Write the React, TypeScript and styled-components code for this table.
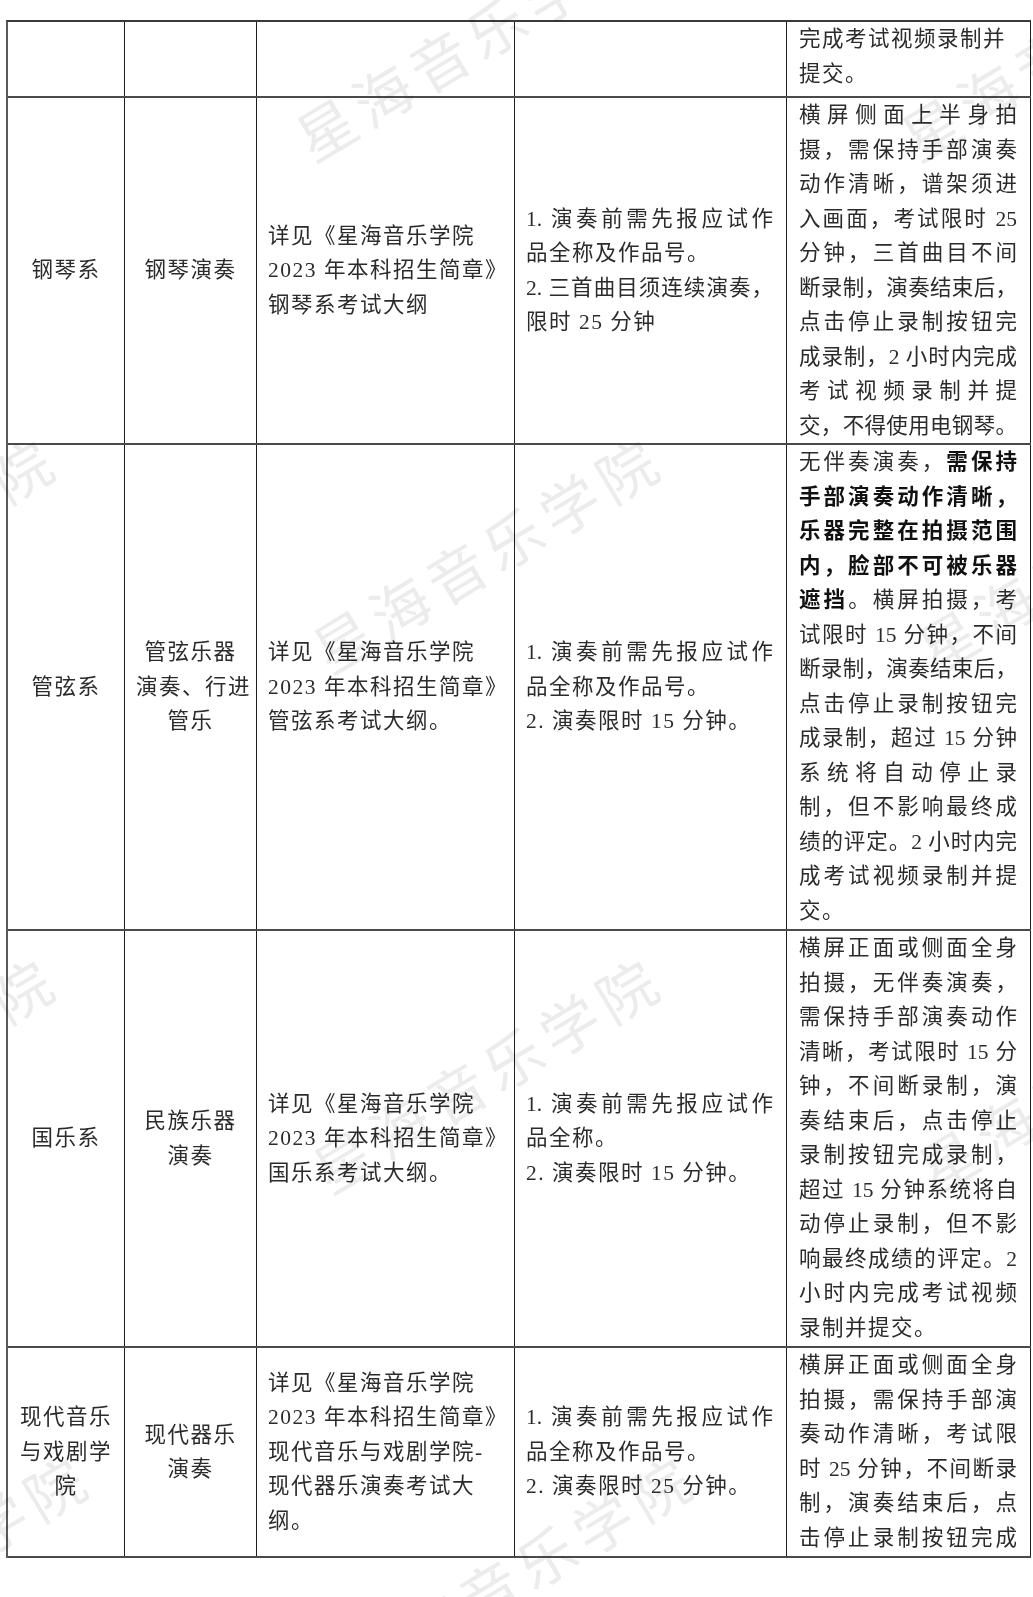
import React from 'react';
import styled, { createGlobalStyle, css } from 'styled-components';

const GlobalStyle = createGlobalStyle`
  html, body {
    margin: 0;
    padding: 0;
    background: #fff;
  }
  body {
    font-family: "Liberation Serif", "Noto Sans CJK SC", serif;
  }
`;

const Page = styled.div`
  position: relative;
  width: 1033px;
  height: 1597px;
  overflow: hidden;
  box-sizing: border-box;
  padding: 20px 0 0 6px;
  background: #fff;
`;

const Table = styled.div`
  display: flex;
  flex-direction: column;
  width: 1025px;
  box-sizing: border-box;
  border-top: 2px solid #3a3a3a;
  border-left: 2px solid #5a5a5a;
`;

const Row = styled.div<{ $height: number }>`
  display: grid;
  grid-template-columns: 117px 132px 258px 272px 244px;
  height: ${(p) => p.$height}px;
  box-sizing: border-box;
  border-bottom: 2px solid #4a4a4a;
`;

const Cell = styled.div<{ $center?: boolean; $top?: boolean; $padRight?: number }>`
  display: flex;
  flex-direction: column;
  justify-content: ${(p) => (p.$top ? 'flex-start' : 'center')};
  box-sizing: border-box;
  padding: 0 ${(p) => p.$padRight ?? 11}px 0 ${(p) => (p.$top ? 12 : 11)}px;
  border-right: 1px solid #1e1e1e;
  text-align: ${(p) => (p.$center ? 'center' : 'left')};
  font-size: 21.5px;
  line-height: 34.5px;
  color: #2b2b2b;
  overflow: hidden;
`;

const Line = styled.span<{ $full?: boolean }>`
  display: block;
  ${(p) =>
    p.$full
      ? css`
          letter-spacing: 0;
          text-align: justify;
          text-align-last: justify;
        `
      : css`
          letter-spacing: 1.5px;
          white-space: nowrap;
        `}
`;

const Strong = styled.b`
  font-weight: 700;
  color: #111;
`;

const WatermarkLayer = styled.div`
  position: absolute;
  inset: 0;
  pointer-events: none;
`;

const Watermark = styled.span`
  position: absolute;
  transform: translate(-50%, -50%) rotate(-31deg);
  font-family: "Noto Sans CJK SC", sans-serif;
  font-size: 58px;
  letter-spacing: 8px;
  line-height: 1;
  color: #ececec;
  white-space: nowrap;
  mix-blend-mode: multiply;
`;

type TextLine = { t: string; f?: boolean };

interface IExamRow {
  height: number;
  dept: TextLine[];
  major: TextLine[];
  outline: TextLine[];
  req: TextLine[];
  note: TextLine[];
}

const L = (t: string, f = false): TextLine => ({ t, f });

const OUTLINE_HEAD = [L('详见《星海音乐学院'), L('2023 年本科招生简章》')];

const rows: IExamRow[] = [
  {
    height: 76,
    dept: [],
    major: [],
    outline: [],
    req: [],
    note: [L('完成考试视频录制并'), L('提交。')],
  },
  {
    height: 347,
    dept: [L('钢琴系')],
    major: [L('钢琴演奏')],
    outline: [...OUTLINE_HEAD, L('钢琴系考试大纲')],
    req: [L('1. 演奏前需先报应试作', true), L('品全称及作品号。'), L('2. 三首曲目须连续演奏，', true), L('限时 25 分钟')],
    note: [
      L('横屏侧面上半身拍', true),
      L('摄，需保持手部演奏', true),
      L('动作清晰，谱架须进', true),
      L('入画面，考试限时 25', true),
      L('分钟，三首曲目不间', true),
      L('断录制，演奏结束后，', true),
      L('点击停止录制按钮完', true),
      L('成录制，2 小时内完成', true),
      L('考试视频录制并提', true),
      L('交，不得使用电钢琴。', true),
    ],
  },
  {
    height: 486,
    dept: [L('管弦系')],
    major: [L('管弦乐器'), L('演奏、行进'), L('管乐')],
    outline: [...OUTLINE_HEAD, L('管弦系考试大纲。')],
    req: [L('1. 演奏前需先报应试作', true), L('品全称及作品号。'), L('2. 演奏限时 15 分钟。')],
    note: [
      L('无伴奏演奏，**需保持**', true),
      L('**手部演奏动作清晰，**', true),
      L('**乐器完整在拍摄范围**', true),
      L('**内，脸部不可被乐器**', true),
      L('**遮挡**。横屏拍摄，考', true),
      L('试限时 15 分钟，不间', true),
      L('断录制，演奏结束后，', true),
      L('点击停止录制按钮完', true),
      L('成录制，超过 15 分钟', true),
      L('系统将自动停止录', true),
      L('制，但不影响最终成', true),
      L('绩的评定。2 小时内完', true),
      L('成考试视频录制并提', true),
      L('交。'),
    ],
  },
  {
    height: 417,
    dept: [L('国乐系')],
    major: [L('民族乐器'), L('演奏')],
    outline: [...OUTLINE_HEAD, L('国乐系考试大纲。')],
    req: [L('1. 演奏前需先报应试作', true), L('品全称。'), L('2. 演奏限时 15 分钟。')],
    note: [
      L('横屏正面或侧面全身', true),
      L('拍摄，无伴奏演奏，', true),
      L('需保持手部演奏动作', true),
      L('清晰，考试限时 15 分', true),
      L('钟，不间断录制，演', true),
      L('奏结束后，点击停止', true),
      L('录制按钮完成录制，', true),
      L('超过 15 分钟系统将自', true),
      L('动停止录制，但不影', true),
      L('响最终成绩的评定。2', true),
      L('小时内完成考试视频', true),
      L('录制并提交。'),
    ],
  },
  {
    height: 210,
    dept: [L('现代音乐'), L('与戏剧学'), L('院')],
    major: [L('现代器乐'), L('演奏')],
    outline: [...OUTLINE_HEAD, L('现代音乐与戏剧学院-'), L('现代器乐演奏考试大'), L('纲。')],
    req: [L('1. 演奏前需先报应试作', true), L('品全称及作品号。'), L('2. 演奏限时 25 分钟。')],
    note: [
      L('横屏正面或侧面全身', true),
      L('拍摄，需保持手部演', true),
      L('奏动作清晰，考试限', true),
      L('时 25 分钟，不间断录', true),
      L('制，演奏结束后，点', true),
      L('击停止录制按钮完成', true),
    ],
  },
];

// "**" marks the bold part of a line
const renderText = (text: string) =>
  text.split('**').map((part, i) => (i % 2 === 1 ? <Strong key={i}>{part}</Strong> : part));

const Lines: React.FC<{ lines: TextLine[] }> = ({ lines }) => (
  <>
    {lines.map((line, i) => (
      <Line key={i} $full={line.f}>
        {renderText(line.t)}
      </Line>
    ))}
  </>
);

// watermark tiles: one diagonal "星海音乐学院" per tile
const WATERMARK_ROWS = [
  { x: 470, y: 40 },
  { x: 487, y: 552 },
  { x: 487, y: 1072 },
  { x: 520, y: 1570 },
];
const WATERMARK_STEP = 605;

const App: React.FC = () => {
  const marks = WATERMARK_ROWS.flatMap((r) =>
    [-1, 0, 1].map((k) => ({ x: r.x + k * WATERMARK_STEP, y: r.y })),
  );

  return (
    <Page>
      <GlobalStyle />
      <Table>
        {rows.map((row, i) => (
          <Row key={i} $height={row.height}>
            <Cell $center>
              <Lines lines={row.dept} />
            </Cell>
            <Cell $center>
              <Lines lines={row.major} />
            </Cell>
            <Cell $padRight={12}>
              <Lines lines={row.outline} />
            </Cell>
            <Cell $padRight={13}>
              <Lines lines={row.req} />
            </Cell>
            <Cell $top $padRight={13}>
              <Lines lines={row.note} />
            </Cell>
          </Row>
        ))}
      </Table>
      <WatermarkLayer>
        {marks.map((m, i) => (
          <Watermark key={i} style={{ left: m.x, top: m.y }}>
            星海音乐学院
          </Watermark>
        ))}
      </WatermarkLayer>
    </Page>
  );
};

export default App;
